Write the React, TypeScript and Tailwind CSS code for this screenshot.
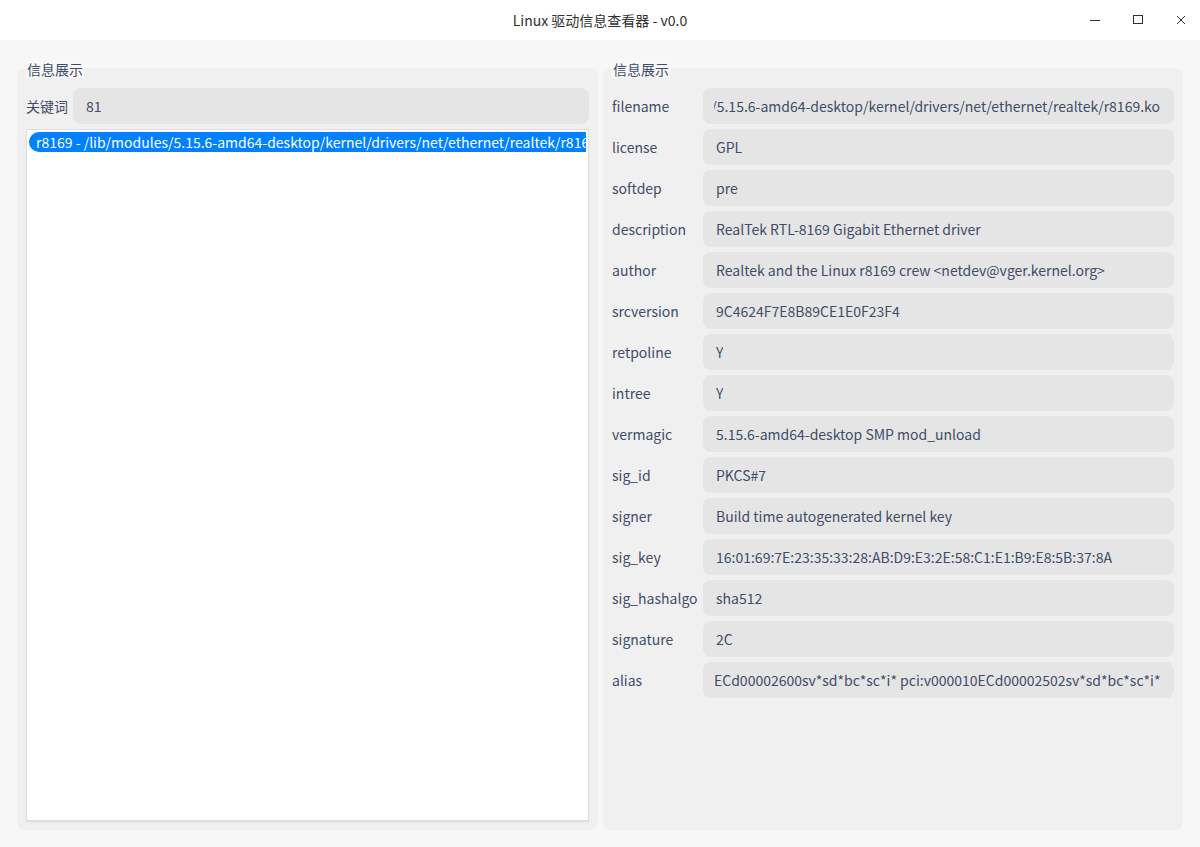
const rows: [string, string][] = [
  ["filename", "/lib/modules/5.15.6-amd64-desktop/kernel/drivers/net/ethernet/realtek/r8169.ko"],
  ["license", "GPL"],
  ["softdep", "pre"],
  ["description", "RealTek RTL-8169 Gigabit Ethernet driver"],
  ["author", "Realtek and the Linux r8169 crew <netdev@vger.kernel.org>"],
  ["srcversion", "9C4624F7E8B89CE1E0F23F4"],
  ["retpoline", "Y"],
  ["intree", "Y"],
  ["vermagic", "5.15.6-amd64-desktop SMP mod_unload"],
  ["sig_id", "PKCS#7"],
  ["signer", "Build time autogenerated kernel key"],
  ["sig_key", "16:01:69:7E:23:35:33:28:AB:D9:E3:2E:58:C1:E1:B9:E8:5B:37:8A"],
  ["sig_hashalgo", "sha512"],
  ["signature", "2C"],
  ["alias", "ECd00002600sv*sd*bc*sc*i* pci:v000010ECd00002502sv*sd*bc*sc*i*"],
];

function GroupTitle() {
  return (
    <div className="relative z-10 self-start ml-[9px] h-[18px] px-px leading-[18px] bg-[#f8f8f8] text-[14px] text-[#414d68]">
      信息展示
    </div>
  );
}

function ValueBox({ label, value }: { label: string; value: string }) {
  const scrolled = label === "filename";
  return (
    <div className="flex items-center h-[36px]">
      <div className="w-[91px] shrink-0 text-[14px] text-[#414d68]">{label}</div>
      <div className="flex-1 min-w-0 h-[36px] rounded-[8px] bg-[#e5e5e5] flex items-center text-[14px] text-[#414d68]">
        {scrolled ? (
          <div className="ml-[11px] mr-[14px] flex-1 min-w-0 overflow-hidden flex justify-end whitespace-nowrap">
            {value}
          </div>
        ) : (
          <div className={"overflow-hidden whitespace-nowrap " + (label === "alias" ? "pl-[11px]" : "pl-[13px]")}>
            {value}
          </div>
        )}
      </div>
    </div>
  );
}

export default function App() {
  return (
    <div
      className="w-[1200px] h-[847px] flex flex-col bg-[#f7f7f7] overflow-hidden"
      style={{ fontFamily: '"Noto Sans CJK SC", "Noto Sans", sans-serif' }}
    >
      {/* title bar */}
      <div className="relative h-[40px] shrink-0 bg-white flex items-center justify-center">
        <span className="text-[14px] text-[#303030]">Linux 驱动信息查看器 - v0.0</span>
        <div className="absolute -right-[2px] top-0 h-[40px] flex items-center">
          <button className="w-[43px] h-[40px] flex items-center justify-center">
            <svg width="12" height="12" viewBox="0 0 12 12">
              <path d="M1 6.5h10" stroke="#303030" strokeWidth="1" />
            </svg>
          </button>
          <button className="w-[43px] h-[40px] flex items-center justify-center">
            <svg width="12" height="12" viewBox="0 0 12 12">
              <rect x="1.5" y="1.5" width="9" height="8" fill="none" stroke="#303030" strokeWidth="1" />
            </svg>
          </button>
          <button className="w-[43px] h-[40px] flex items-center justify-center">
            <svg width="12" height="12" viewBox="0 0 12 12">
              <path d="M2 2l8 8M10 2l-8 8" stroke="#303030" strokeWidth="1" />
            </svg>
          </button>
        </div>
      </div>

      {/* body */}
      <div className="flex-1 min-h-0 flex gap-[5px] pl-[17px] pr-[17px] pt-[20px] pb-[17px]">
        {/* left */}
        <div className="w-[581px] shrink-0 flex flex-col">
          <GroupTitle />
          <div className="-mt-[10px] flex-1 min-h-0 rounded-[8px] bg-[#f0f0f0] pt-[20px] px-[9px] pb-[9px] flex flex-col gap-[5px]">
            <div className="flex items-center h-[36px] gap-[5px]">
              <span className="text-[14px] text-[#414d68]">关键词</span>
              <div className="flex-1 h-[36px] rounded-[8px] bg-[#e5e5e5] flex items-center pl-[13px] text-[14px] text-[#414d68]">
                81
              </div>
            </div>
            <div className="flex-1 min-h-0 bg-white border border-[#dedede] shadow-[0_1px_1px_rgba(0,0,0,0.08)] p-[2px] overflow-hidden">
              <div className="h-[20px] rounded-l-full bg-[#0081ff] text-white text-[14px] leading-[20px] pl-[7px] whitespace-nowrap overflow-hidden">
                r8169 - /lib/modules/5.15.6-amd64-desktop/kernel/drivers/net/ethernet/realtek/r8169.ko
              </div>
            </div>
          </div>
        </div>

        {/* right */}
        <div className="flex-1 min-w-0 flex flex-col">
          <GroupTitle />
          <div className="-mt-[10px] flex-1 min-h-0 rounded-[8px] bg-[#f0f0f0] pt-[20px] px-[9px] pb-[9px] flex flex-col gap-[5px]">
            {rows.map(([k, v]) => (
              <ValueBox key={k} label={k} value={v} />
            ))}
          </div>
        </div>
      </div>
    </div>
  );
}
